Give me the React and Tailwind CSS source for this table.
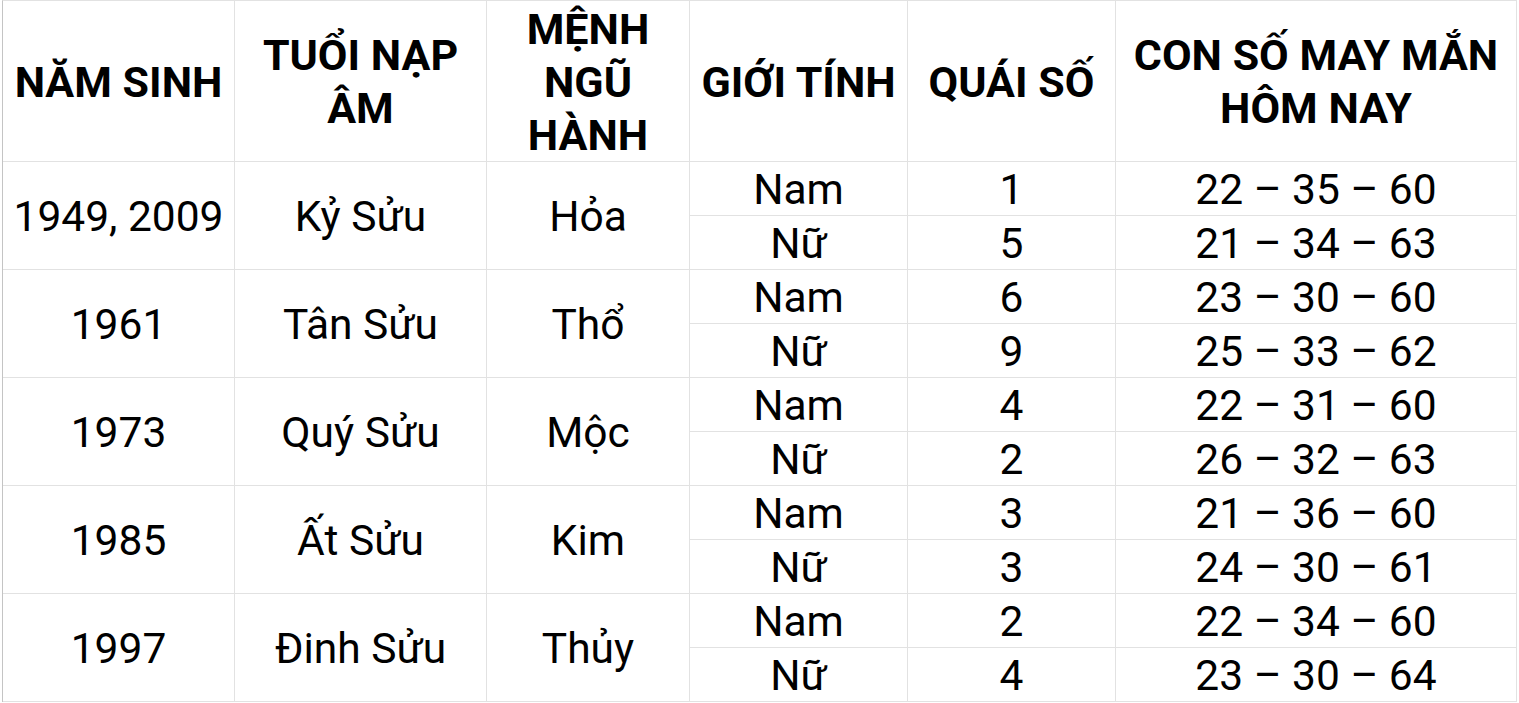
import React from "react";

const groups = [
  { year: "1949, 2009", tuoi: "Kỷ Sửu", menh: "Hỏa", rows: [["Nam", "1", "22 – 35 – 60"], ["Nữ", "5", "21 – 34 – 63"]] },
  { year: "1961", tuoi: "Tân Sửu", menh: "Thổ", rows: [["Nam", "6", "23 – 30 – 60"], ["Nữ", "9", "25 – 33 – 62"]] },
  { year: "1973", tuoi: "Quý Sửu", menh: "Mộc", rows: [["Nam", "4", "22 – 31 – 60"], ["Nữ", "2", "26 – 32 – 63"]] },
  { year: "1985", tuoi: "Ất Sửu", menh: "Kim", rows: [["Nam", "3", "21 – 36 – 60"], ["Nữ", "3", "24 – 30 – 61"]] },
  { year: "1997", tuoi: "Đinh Sửu", menh: "Thủy", rows: [["Nam", "2", "22 – 34 – 60"], ["Nữ", "4", "23 – 30 – 64"]] },
];

const cell = "flex items-center justify-center text-center border-r border-b border-[#e2e2e2]";
const head = `${cell} font-bold text-[43px] leading-[53px] pt-[2px]`;
const data = `${cell} text-[42.5px] leading-none pt-[4px]`;

export default function App() {
  return (
    <div className="w-[1519px] h-[703px] bg-white overflow-hidden pl-[2px] text-black" style={{ fontFamily: "Roboto, 'Noto Sans', sans-serif" }}>
      <div className="grid grid-cols-[232px_252px_203px_218px_208px_401px] grid-rows-[161px_repeat(10,54px)] border-l border-t border-l-[#c4c4c4] border-t-[#e2e2e2] w-fit">
        <div className={head}>NĂM SINH</div>
        <div className={head}>TUỔI NẠP<br />ÂM</div>
        <div className={head}>MỆNH<br />NGŨ<br />HÀNH</div>
        <div className={head}>GIỚI TÍNH</div>
        <div className={head}>QUÁI SỐ</div>
        <div className={head}>CON SỐ MAY MẮN<br />HÔM NAY</div>
        {groups.map((g) => (
          <React.Fragment key={g.year}>
            <div className={`${data} row-span-2`}>{g.year}</div>
            <div className={`${data} row-span-2`}>{g.tuoi}</div>
            <div className={`${data} row-span-2`}>{g.menh}</div>
            <div className={data}>{g.rows[0][0]}</div>
            <div className={data}>{g.rows[0][1]}</div>
            <div className={data}>{g.rows[0][2]}</div>
            <div className={data}>{g.rows[1][0]}</div>
            <div className={data}>{g.rows[1][1]}</div>
            <div className={data}>{g.rows[1][2]}</div>
          </React.Fragment>
        ))}
      </div>
    </div>
  );
}
